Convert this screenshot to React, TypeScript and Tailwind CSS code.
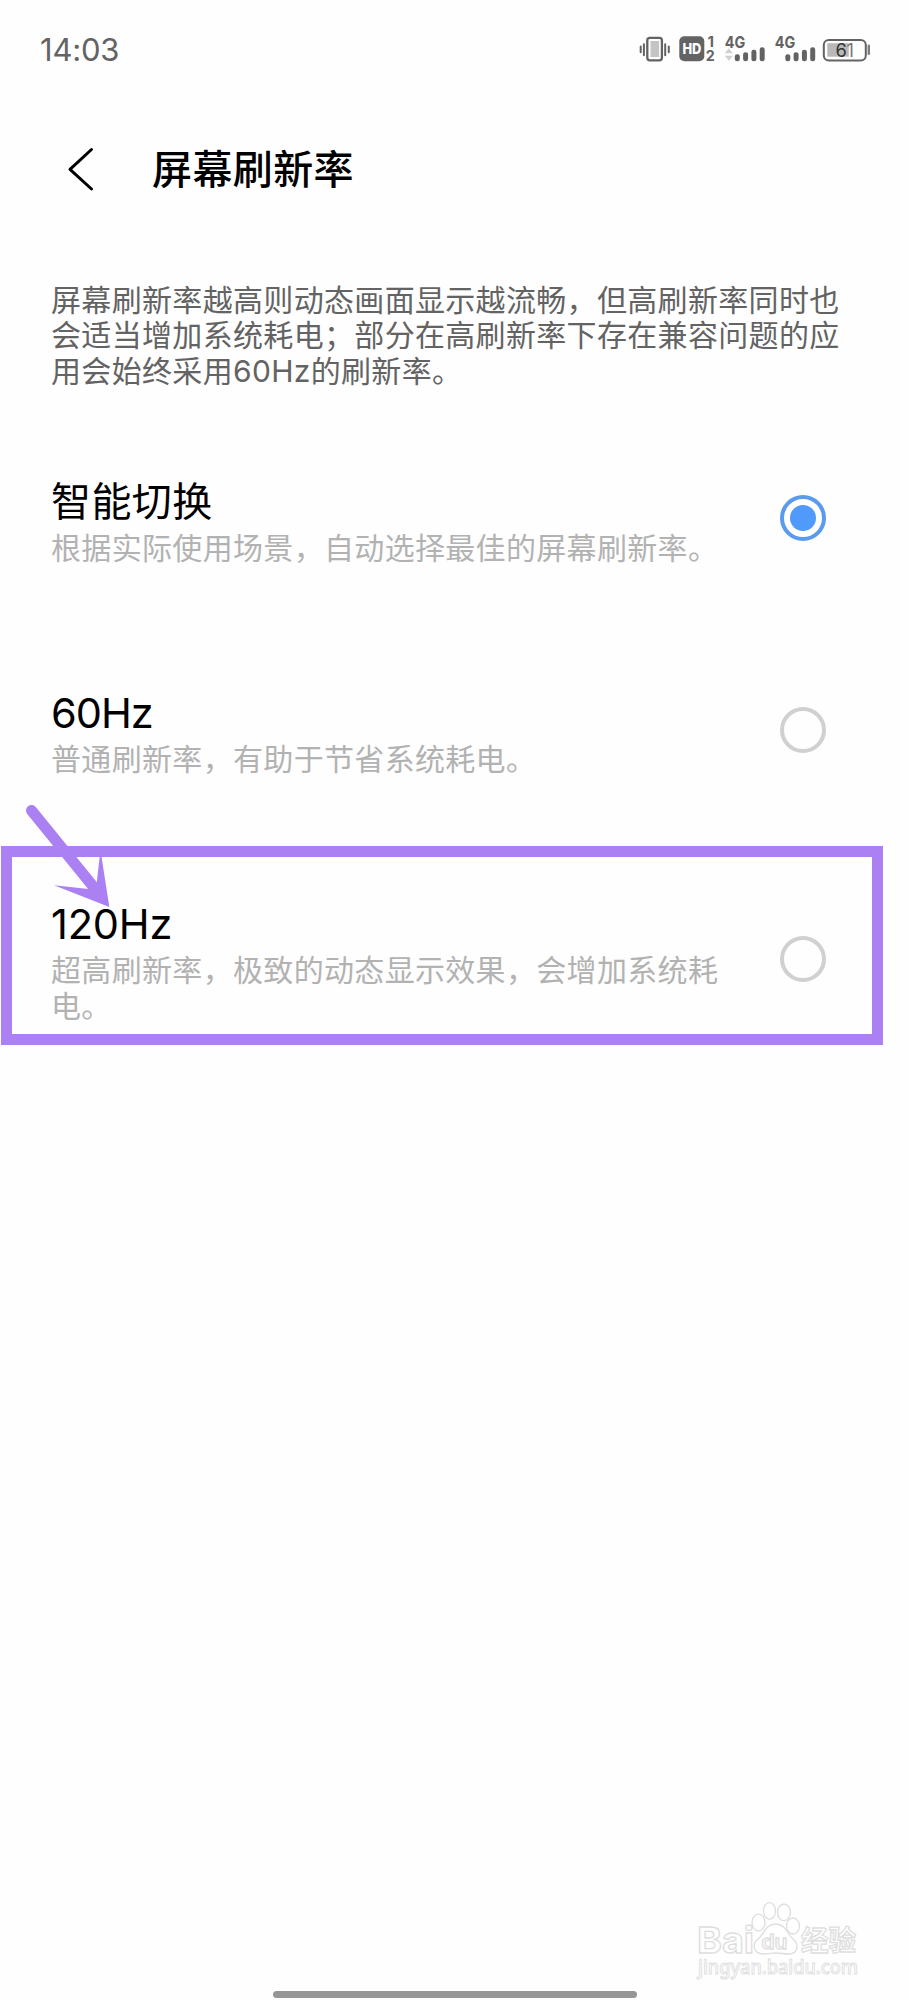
import React from "react";

const BODY = "text-[30px] leading-[35.4px] tracking-[0.33px] whitespace-pre";

function SignalBars() {
  return (
    <g fill="#636363">
      <rect x="0" y="20" width="5" height="7" rx="2.3" />
      <rect x="8.3" y="18" width="5" height="9" rx="2.3" />
      <rect x="16.6" y="15.5" width="5" height="11.5" rx="2.3" />
      <rect x="24.9" y="13" width="5" height="14" rx="2.3" />
    </g>
  );
}

function StatusIcons() {
  return (
    <svg className="h-[44px] w-[240px]" viewBox="-0.8 -7.2 240 44" fontFamily="Inter, sans-serif">
      <rect x="7.5" y="3.6" width="14.6" height="22.5" rx="2.5" fill="#fff" stroke="#636363" strokeWidth="2.3" />
      <rect x="10.7" y="6.8" width="8.6" height="16" fill="#c4c4c4" />
      <g stroke="#636363" strokeWidth="2" strokeLinecap="round">
        <path d="M4.1 10v11M.9 12.3v5.7M25.4 10v11M29 12.3v5.7" />
      </g>
      <rect x="39.5" y="2" width="25" height="25" rx="5" fill="#636363" />
      <text x="42.6" y="20" fontSize="15" fontWeight="800" fill="#fff" textLength="19" lengthAdjust="spacingAndGlyphs">HD</text>
      <g fill="#636363" fontWeight="700">
        <text x="67.8" y="13" fontSize="15" textLength="7">1</text>
        <text x="66" y="27.3" fontSize="15" textLength="9" lengthAdjust="spacingAndGlyphs">2</text>
        <text x="85" y="13.7" fontSize="16.2" textLength="20.5" lengthAdjust="spacingAndGlyphs">4G</text>
        <text x="135" y="13.7" fontSize="16.2" textLength="20.5" lengthAdjust="spacingAndGlyphs">4G</text>
      </g>
      <path d="M85 19l4-5 4 5zM85 21.5l4 5 4-5z" fill="#d0d0d0" />
      <g transform="translate(95 0)"><SignalBars /></g>
      <g transform="translate(145.5 0)"><SignalBars /></g>
      <rect x="184" y="5.8" width="42" height="20.5" rx="5" fill="#fff" stroke="#636363" strokeWidth="2" />
      <rect x="187.5" y="9" width="21.5" height="13.5" fill="#b9b9b9" />
      <path d="M229 11.5v8" stroke="#7c7c7c" strokeWidth="2.4" strokeLinecap="round" />
      <text x="195.6" y="22.5" fontSize="18.3" fill="#333">6</text>
      <text x="206.8" y="22.5" fontSize="18.3" fill="#777">1</text>
    </svg>
  );
}

function Radio({ checked }: { checked?: boolean }) {
  return (
    <span
      role="radio"
      aria-checked={!!checked}
      className={
        checked
          ? "flex size-[46px] items-center justify-center rounded-full border-4 border-[#5a9bee] bg-white"
          : "flex size-[46px] rounded-full border-4 border-[#d0d0d0]"
      }
    >
      {checked && <span className="size-[26px] rounded-full bg-[#4f9afb]" />}
    </span>
  );
}

function Option({ title, note, checked, titleClass }: { title: string; note: string; checked?: boolean; titleClass: string }) {
  return (
    <div className="flex items-center justify-between pt-[6px]">
      <div>
        <h2 className={`mb-[4px] leading-[50px] text-black ${titleClass}`}>{title}</h2>
        <p className={`${BODY} text-[#b2b2b2]`}>{note}</p>
      </div>
      <div className="-mt-[6px]">
        <Radio checked={checked} />
      </div>
    </div>
  );
}

function Watermark() {
  return (
    <svg
      className="absolute top-[1896px] left-[690px] h-[90px] w-[180px]"
      viewBox="0 0 180 90"
      fill="#fff"
      stroke="#dedede"
      strokeWidth="1.3"
      fontFamily="Inter, 'Noto Sans CJK SC', sans-serif"
    >
      <text x="7" y="56.5" fontSize="36" fontWeight="700" textLength="57" lengthAdjust="spacingAndGlyphs">Bai</text>
      <ellipse cx="68.5" cy="26.5" rx="6.5" ry="8.3" />
      <ellipse cx="79.5" cy="15" rx="6" ry="8.3" />
      <ellipse cx="94" cy="16.3" rx="6.5" ry="8.3" />
      <ellipse cx="103" cy="30" rx="6.5" ry="8" />
      <path d="M85.5 28C75 28 74 39 68 43c-7 6-3.500 15 5 15 6 0 8-1 13-1s8 1 13 1c8 0 11-9 4-15-6-5-7-15-17.500-15z" />
      <text x="71.5" y="52.500" fontSize="20" fontWeight="600" textLength="26" lengthAdjust="spacingAndGlyphs">du</text>
      <text x="111" y="54.500" fontSize="28" fontWeight="700" textLength="55" lengthAdjust="spacingAndGlyphs">经验</text>
      <text x="8" y="77.500" fontSize="20" strokeWidth="1" fontFamily="'Noto Sans', sans-serif" fontWeight="500" textLength="160" lengthAdjust="spacingAndGlyphs">jingyan.baidu.com</text>
    </svg>
  );
}

export default function App() {
  return (
    <div className="relative flex h-[2000px] w-[909px] flex-col overflow-hidden bg-[#fefefe] font-['Inter','Noto_Sans_CJK_SC',sans-serif]">
      <header className="flex h-[98px] items-center justify-between pr-[30px] pl-[40px]">
        <time className="text-[31px] leading-none tracking-[-0.2px] text-[#636363]">14:03</time>
        <StatusIcons />
      </header>

      <nav className="flex h-[144px] items-center pl-[66px]">
        <svg className="h-[46px] w-[30px]" viewBox="0 0 30 46" fill="none" stroke="#000" strokeWidth="3" strokeLinecap="round" strokeLinejoin="round">
          <path d="M25.500 2.500L4 22.300 25.500 42" />
        </svg>
        <h1 className="pl-[56px] text-[40px] leading-[50px] font-medium tracking-[0.4px] text-black">屏幕刷新率</h1>
      </nav>

      <main className="flex flex-col pr-[83px] pl-[51px]">
        <p className={`${BODY} pt-[41px] text-[#636363]`}>
          {"屏幕刷新率越高则动态画面显示越流畅，但高刷新率同时也\n会适当增加系统耗电；部分在高刷新率下存在兼容问题的应\n用会始终采用60Hz的刷新率。"}
        </p>
        <div role="radiogroup" className="flex flex-col gap-[116px] pt-[81.4px]">
          <Option title="智能切换" note="根据实际使用场景，自动选择最佳的屏幕刷新率。" checked titleClass="text-[40px] tracking-[0.4px]" />
          <Option title="60Hz" note="普通刷新率，有助于节省系统耗电。" titleClass="text-[41.5px] tracking-[-1px]" />
          <Option title="120Hz" note={"超高刷新率，极致的动态显示效果，会增加系统耗\n电。"} titleClass="text-[41.5px] tracking-[-0.2px]" />
        </div>
      </main>

      <div className="absolute top-[846px] left-[1px] h-[199px] w-[882px] border-[11px] border-[#aa80f2]" />
      <svg className="absolute top-[800px] left-[20px] h-[110px] w-[100px]" viewBox="20 800 100 110" fill="#aa80f2">
        <path d="M31.500 810.500L92 885" stroke="#aa80f2" strokeWidth="11" strokeLinecap="round" fill="none" />
        <path d="M109.300 907L54 885.300 88.500 889 96.800 882 100.500 850z" />
      </svg>

      <Watermark />
      <div className="absolute top-[1991px] left-[273px] h-[7px] w-[364px] rounded-full bg-[#969696]" />
    </div>
  );
}
